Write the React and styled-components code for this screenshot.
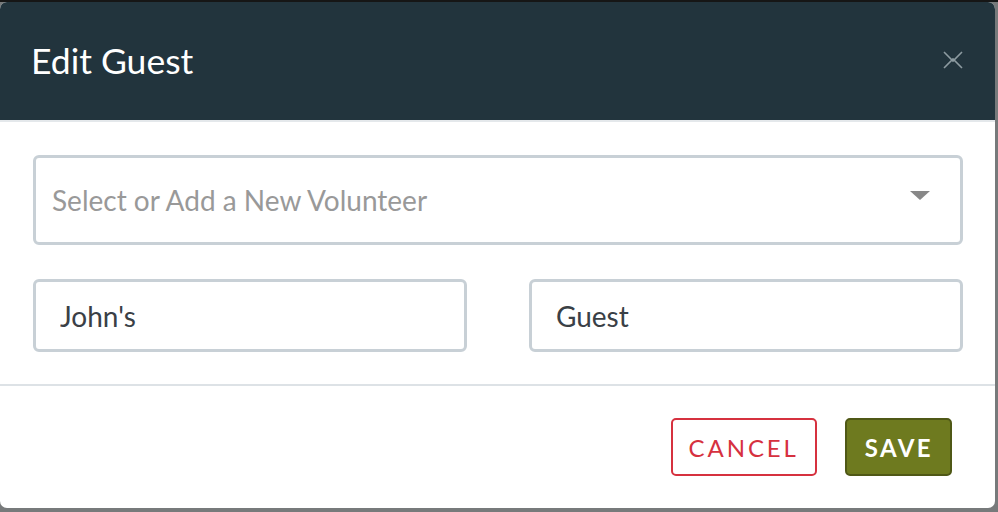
import styled, { createGlobalStyle } from "styled-components";

const GlobalStyle = createGlobalStyle`
  html, body {
    margin: 0;
    padding: 0;
    background: #777a7b;
    font-family: Lato, "Open Sans", sans-serif;
  }
  body {
    border-top: 2px solid #161616;
  }
`;

const Backdrop = styled.div`
  width: 998px;
  height: 510px;
  overflow: hidden;
`;

const Modal = styled.div`
  width: 995px;
  height: 506px;
  background: #ffffff;
  border-radius: 7px;
  overflow: hidden;
  display: flex;
  flex-direction: column;
`;

const Header = styled.div`
  height: 118px;
  background: #22343d;
  border-bottom: 2px solid #e4e8eb;
  display: flex;
  align-items: center;
  justify-content: space-between;
  padding: 0 32px 0 31px;
`;

const Title = styled.h1`
  margin: 0;
  color: #ffffff;
  font-size: 35.5px;
  font-weight: 400;
  padding-bottom: 2px;
`;

const CloseButton = styled.button`
  background: none;
  border: 0;
  padding: 0;
  width: 22px;
  height: 20px;
  cursor: pointer;
  display: flex;
  margin-right: -1px;
  margin-bottom: 2px;
`;

const Body = styled.div`
  padding: 33px 32px 32px 33px;
  display: flex;
  flex-direction: column;
  gap: 34px;
  border-bottom: 2px solid #dde2e6;
`;

const SelectBox = styled.div`
  height: 90px;
  box-sizing: border-box;
  border: 3px solid #c8d0d6;
  border-radius: 6px;
  display: flex;
  align-items: center;
  justify-content: space-between;
  padding: 0 30px 0 16px;
`;

const Placeholder = styled.span`
  color: #999999;
  font-size: 28px;
`;

const Caret = styled.span`
  width: 0;
  height: 0;
  border-left: 10px solid transparent;
  border-right: 10px solid transparent;
  border-top: 9px solid #888888;
  margin-bottom: 10px;
`;

const Row = styled.div`
  display: grid;
  grid-template-columns: 1fr 1fr;
  gap: 62px;
`;

const TextInput = styled.input`
  height: 73px;
  box-sizing: border-box;
  border: 3px solid #c8d0d6;
  border-radius: 6px;
  padding: 0 24px;
  font-family: Lato, "Open Sans", sans-serif;
  font-size: 28px;
  color: #3a4046;
  outline: none;
  width: 100%;
`;

const Footer = styled.div`
  flex: 1;
  display: flex;
  justify-content: flex-end;
  align-items: flex-start;
  gap: 28px;
  padding: 32px 43px 0 0;
`;

const Button = styled.button`
  height: 58px;
  box-sizing: border-box;
  border-radius: 5px;
  font-family: Lato, "Open Sans", sans-serif;
  font-size: 24px;
  cursor: pointer;
  letter-spacing: ${({ $primary }) => ($primary ? "2.4px" : "2.9px")};
  padding: 0 ${({ $primary }) => ($primary ? "17px 0 18px" : "16px")};
  font-weight: ${({ $primary }) => ($primary ? 700 : 400)};
  color: ${({ $primary }) => ($primary ? "#ffffff" : "#d6313f")};
  background: ${({ $primary }) => ($primary ? "#6e7a1f" : "#ffffff")};
  border: 2px solid ${({ $primary }) => ($primary ? "#4f5816" : "#d6313f")};
`;

export default function App() {
  return (
    <>
      <GlobalStyle />
      <Backdrop>
        <Modal>
          <Header>
            <Title>Edit Guest</Title>
            <CloseButton aria-label="Close">
              <svg width="22" height="20" viewBox="0 0 22 20" fill="none">
                <path d="M2 2 L11 11 L20 2 M2 18 L11 9 L20 18" stroke="#8d9ba1" strokeWidth="1.6" />
              </svg>
            </CloseButton>
          </Header>
          <Body>
            <SelectBox>
              <Placeholder>Select or Add a New Volunteer</Placeholder>
              <Caret />
            </SelectBox>
            <Row>
              <TextInput defaultValue="John's" />
              <TextInput defaultValue="Guest" />
            </Row>
          </Body>
          <Footer>
            <Button>CANCEL</Button>
            <Button $primary>SAVE</Button>
          </Footer>
        </Modal>
      </Backdrop>
    </>
  );
}
